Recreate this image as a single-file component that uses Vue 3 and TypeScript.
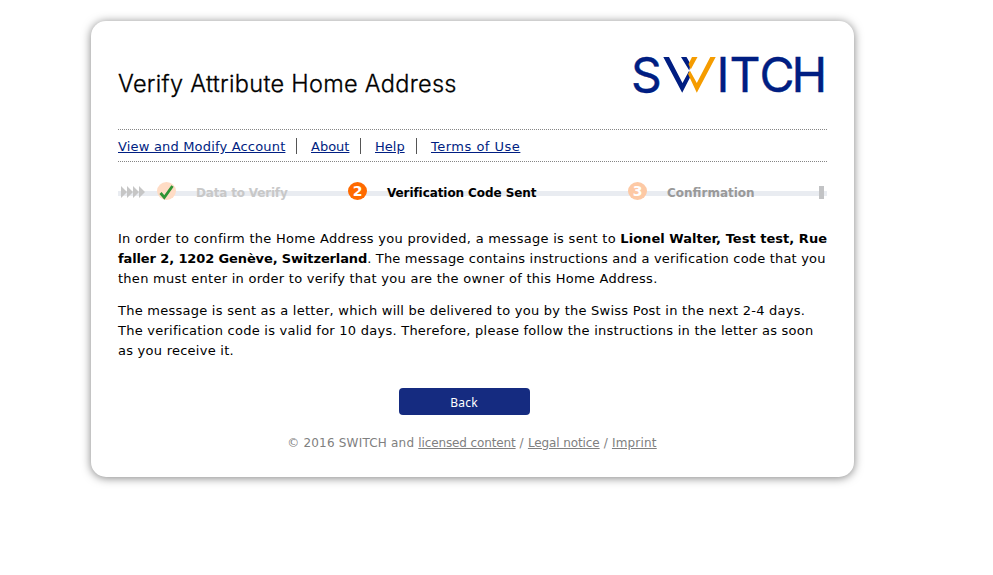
<script setup lang="ts">
interface Link { label: string; width: number }
const nav: Link[] = [
  { label: 'View and Modify Account', width: 167 },
  { label: 'About', width: 38 },
  { label: 'Help', width: 30 },
  { label: 'Terms of Use', width: 90 },
]
</script>

<template>
  <main class="card">
    <header class="header">
      <h1>Verify Attribute Home Address</h1>
      <svg class="logo" width="194" height="40" viewBox="0 0 194 40" role="img">
        <text class="word" x="-1" y="37">S</text>
        <path class="navy" d="M31.300 2H37L50.500 28 57 16 59 20.500 50.200 37.700ZM49 2H54.500L58.500 9 57.300 15.500Z" />
        <path class="gold" d="M60 2H65.500L58.700 14.500 56.500 9ZM56 19 58 15.800 64.800 28 78.300 2H83.700L64.800 37.700Z" />
        <text class="word" x="84.500 97.500 127.500 159.500" y="37">ITCH</text>
      </svg>
    </header>

    <nav class="nav">
      <a v-for="item in nav" :key="item.label" href="#" :style="{ width: item.width + 'px' }">{{ item.label }}</a>
    </nav>

    <ol class="steps">
      <li class="start">
        <svg width="24" height="12" viewBox="0 0 24 12"><path d="M0 0 6 6 0 12ZM6 0 12 6 6 12ZM12 0 18 6 12 12ZM18 0 24 6 18 12Z" /></svg>
      </li>
      <li class="step done">
        <span class="badge"><svg width="19" height="18" viewBox="0 0 19 18"><path d="M3.500 11 7.300 15.500 15.500 4" /></svg></span>
        <span class="label">Data to Verify</span>
      </li>
      <li class="step current"><span class="badge">2</span><span class="label">Verification Code Sent</span></li>
      <li class="step next"><span class="badge">3</span><span class="label">Confirmation</span></li>
      <li class="end"></li>
    </ol>

    <section class="copy">
      <p>
        <span class="line l1">In order to confirm the Home Address you provided, a message is sent to <b>Lionel Walter, Test test, Rue</b></span>
        <span class="line l2"><b>faller 2, 1202 Genève, Switzerland</b>. The message contains instructions and a verification code that you</span>
        <span class="line l3">then must enter in order to verify that you are the owner of this Home Address.</span>
      </p>
      <p>
        <span class="line">The message is sent as a letter, which will be delivered to you by the Swiss Post in the next 2-4 days.</span>
        <span class="line">The verification code is valid for 10 days. Therefore, please follow the instructions in the letter as soon</span>
        <span class="line">as you receive it.</span>
      </p>
    </section>

    <button type="button" class="back">Back</button>

    <footer class="footer">© 2016 SWITCH and <a class="licence" href="#">licensed content</a> / <a class="legal" href="#">Legal notice</a> / <a href="#">Imprint</a></footer>
  </main>
</template>

<style>
body { display: flow-root; min-height: 100vh; background: #fff; }
</style>

<style scoped>
.card {
  box-sizing: border-box;
  width: 763px;
  height: 456px;
  margin: 21px 0 0 91px;
  padding: 0 27px;
  border-radius: 15px;
  background: #fff;
  box-shadow: 0 1px 10px rgba(0, 0, 0, 0.5);
  color: #000;
  font: 13px/20px "DejaVu Sans", Verdana, sans-serif;
  display: flex;
  flex-direction: column;
}
.header { display: flex; justify-content: space-between; height: 108px; }
h1 { margin: 49px 0 0; font: 300 23.5px/28px Inter, sans-serif; letter-spacing: 0.29px; white-space: nowrap; -webkit-text-stroke: 0.3px #000; }
.logo { margin: 34px 1px 0 0; overflow: visible; }
.word { font: 400 48px Inter, sans-serif; fill: #001e82; stroke: #001e82; stroke-width: 0.4px; }
.navy { fill: #001e82; }
.gold { fill: #f59c00; }
.nav {
  box-sizing: border-box;
  display: flex;
  align-items: center;
  height: 33px;
  padding-top: 3px;
  border: dotted #858585;
  border-width: 1px 0;
}
.nav a { color: #001e82; white-space: nowrap; text-align: left; letter-spacing: 0.18px; }
.nav a:nth-child(2), .nav a:nth-child(3) { letter-spacing: 0; }
.nav a:last-child { letter-spacing: 0.5px; }
.nav a + a { position: relative; margin-left: 26px; }
.nav a + a::before { content: ""; position: absolute; left: -15px; top: 1px; width: 1px; height: 16px; background: #555; }
.steps {
  display: flex;
  align-items: center;
  height: 20px;
  margin: 19px 0 0;
  padding: 0;
  list-style: none;
  background: linear-gradient(#e9ecf1, #e9ecf1) 0 10px / 100% 5px no-repeat;
}
.start { width: 39px; height: 14px; display: flex; padding: 2px 0 0 2.500px; box-sizing: border-box; }
.start path { fill: #c6c6c6; }
.step { display: flex; align-items: center; font-weight: bold; font-size: 12px; white-space: nowrap; }
.badge { width: 19px; height: 18px; border-radius: 50%; color: #fff; font: bold 14px/18px "DejaVu Sans", sans-serif; text-align: center; margin-right: 20px; }
.badge svg { display: block; }
.label { position: relative; top: 2px; }
.done { width: 191px; color: #c8c8c8; }
.done .label { letter-spacing: -0.18px; }
.done .badge { background: #ffdcc5; }
.done path { fill: none; stroke: #2f9435; stroke-width: 2.8; }
.current { width: 280px; }
.current .label { letter-spacing: -0.08px; }
.current .badge { background: #ff6a00; }
.next { color: #999; }
.next .badge { background: #fdc9a5; }
.end { width: 5px; height: 13px; margin: 2px 3px 0 auto; background: #c2c3c5; }
.copy { margin-top: 28px; }
.copy p { margin: 0 0 12px; }
.line { display: block; white-space: nowrap; letter-spacing: 0.25px; }
.l1 { letter-spacing: 0.29px; }
.l1 b { letter-spacing: 0.03px; }
.l2 { letter-spacing: 0.18px; }
.l2 b { letter-spacing: -0.12px; }
.l3 { letter-spacing: 0.265px; }
.back {
  align-self: center;
  width: 131px;
  height: 27px;
  margin: 15px 17px 0 0;
  padding: 2px 0 0;
  border: 0;
  border-radius: 4px;
  background: #152b80;
  color: #fff;
  font: 12px "Noto Sans", sans-serif;
  letter-spacing: 0.2px;
}
.footer { margin: 18px 1px 0 0; text-align: center; font-size: 12px; letter-spacing: 0.2px; color: #808080; }
.footer a { color: inherit; }
.licence { letter-spacing: -0.12px; }
.legal { letter-spacing: -0.1px; }
</style>
